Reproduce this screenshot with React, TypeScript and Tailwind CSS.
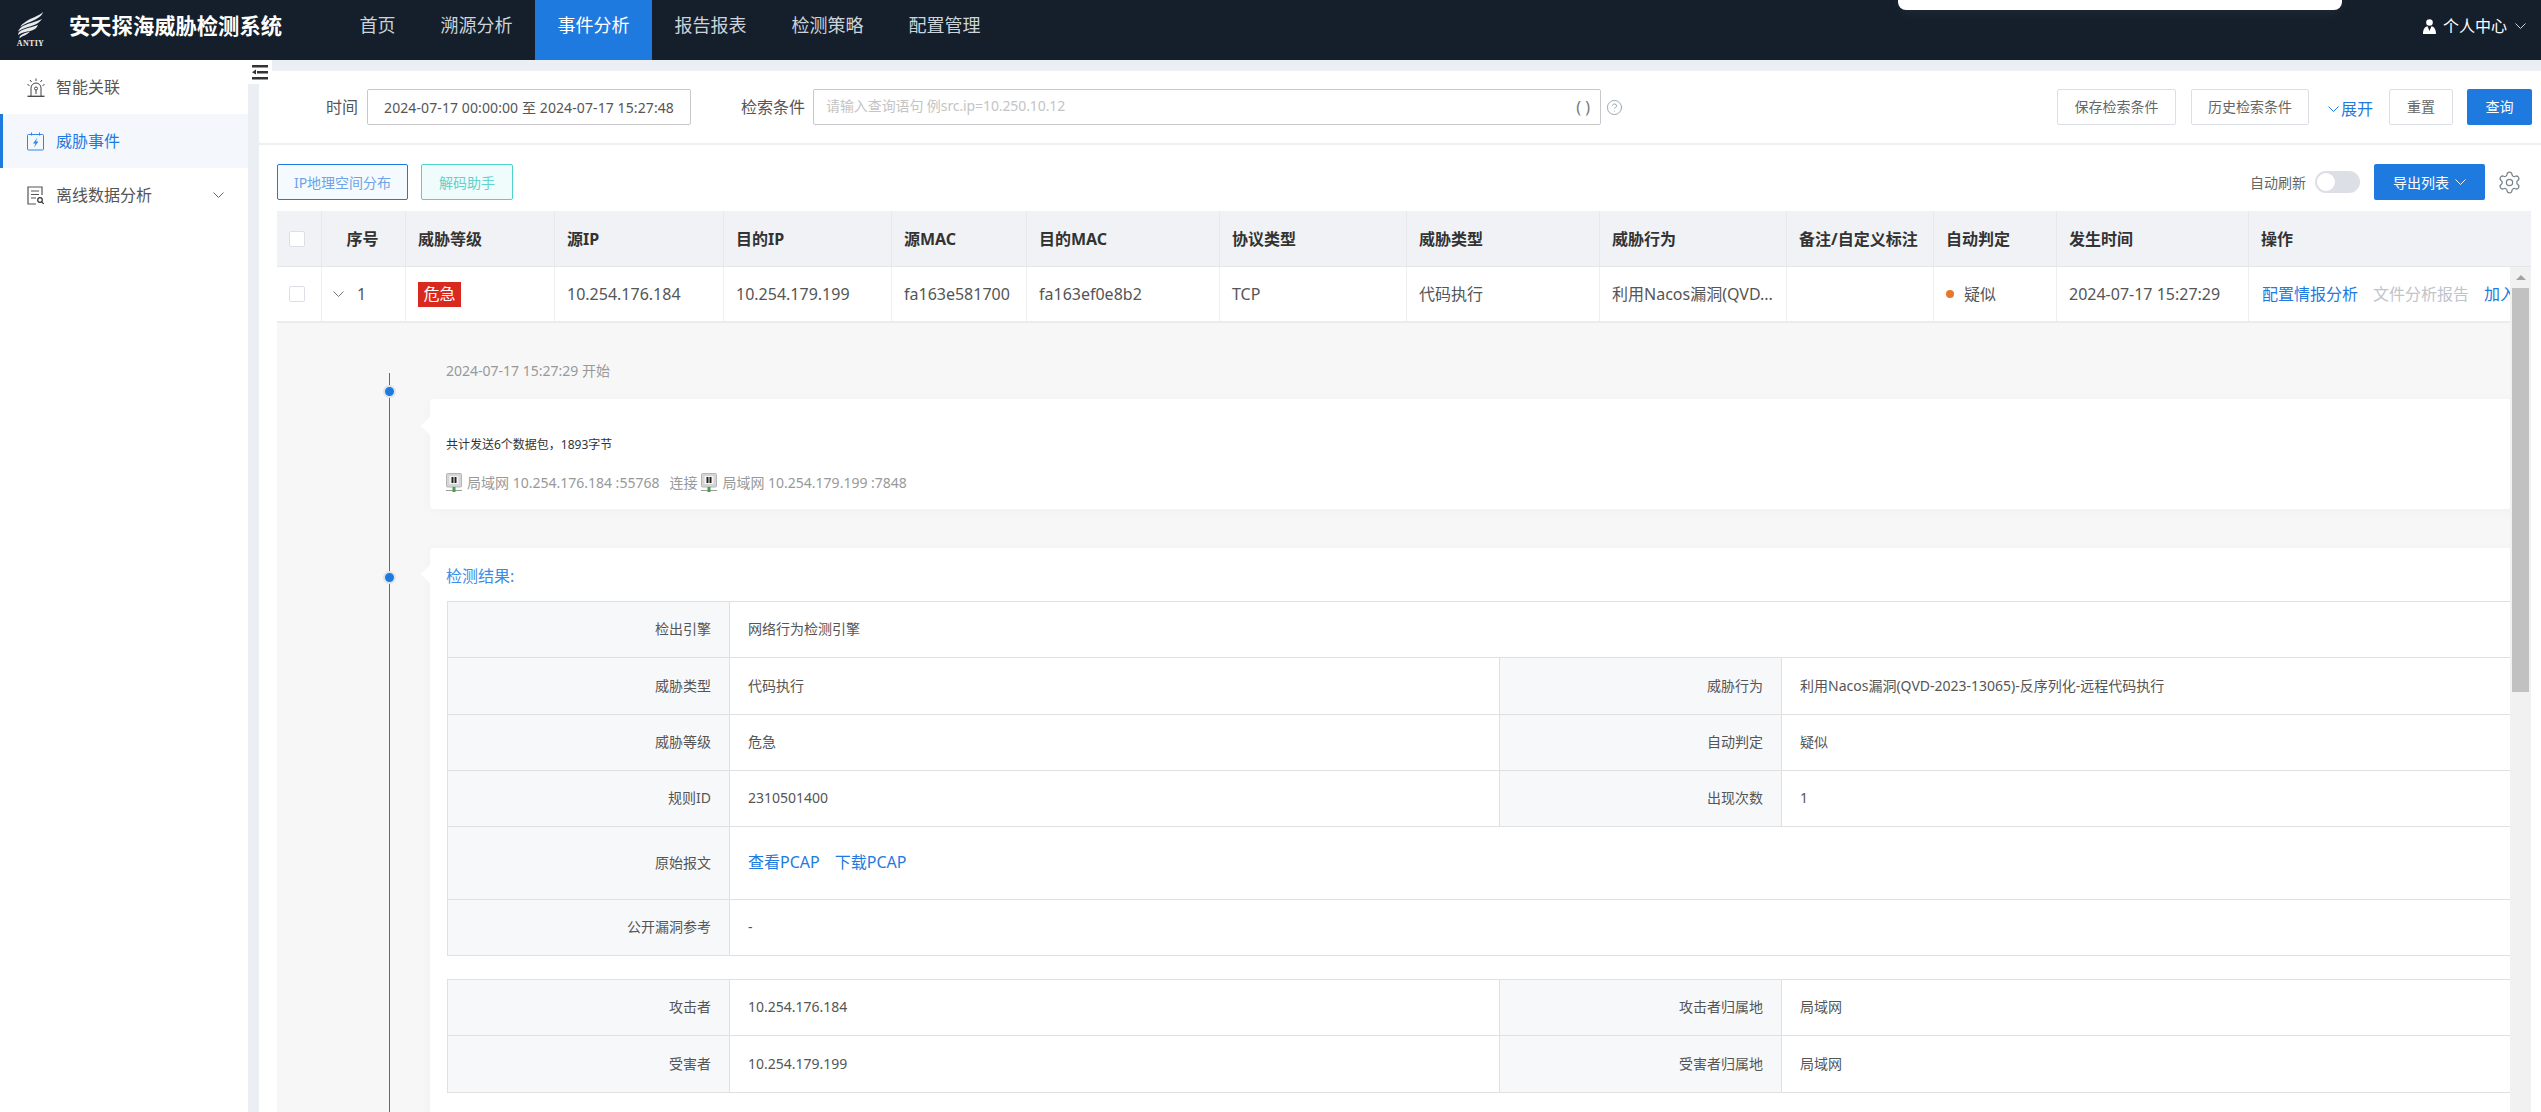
import React from 'react';
import { CircleHelp, Settings } from 'lucide-react';

const navItems = ['首页', '溯源分析', '事件分析', '报告报表', '检测策略', '配置管理'];

const tableCols =
  'grid grid-cols-[45px_84px_149px_169px_168px_135px_193px_187px_193px_187px_147px_123px_192px_282px]';

const headCells = ['威胁等级', '源IP', '目的IP', '源MAC', '目的MAC', '协议类型', '威胁类型', '威胁行为', '备注/自定义标注', '自动判定', '发生时间', '操作'];

// the chevrons in the picture are wide and flat, so drawn by hand
const Chevron = ({ className }: { className?: string }) => (
  <svg width="11" height="6" viewBox="0 0 11 6" fill="none" stroke="currentColor" strokeWidth="1" className={`shrink-0 ${className ?? ''}`}>
    <path d="M0.500 0.500L5.500 5.500L10.500 0.500" />
  </svg>
);

const Logo = () => (
  <div className="ml-[17px] flex w-[27px] shrink-0 flex-col items-center">
    <svg width="27" height="27" viewBox="0 0 27 27" fill="#e8ebee">
      <path d="M26 0C22 4 14 6 9 9.500C6 11.500 4 13 3.500 15C8 11 18 9 23 4.500C24.500 3.300 25.500 1.800 26 0Z" />
      <path d="M25 7C19 10 9 11.500 4 15.500C2.500 16.800 1.500 18 1 19.500C6 15.500 16 14.500 21 11C22.800 9.800 24 8.500 25 7Z" />
      <path d="M21 13C15 15.500 8 16 3.500 19C2 20 1 21.500 1 23C5 19.800 11 20 16 18C18 17.200 20 15.500 21 13Z" />
      <path d="M13 19.500C10 20.500 6 21 3 24C2.500 24.800 2.300 25.600 2.500 26.500C5 23.500 10 23.500 13 19.500Z" />
    </svg>
    <span className="font-['Liberation_Serif',serif] text-[8px] leading-[9px] font-bold tracking-[0.3px] text-[#e8ebee]">ANTIY</span>
  </div>
);

const AlarmIcon = () => (
  <svg width="18" height="19" viewBox="0 0 18 19" fill="none" stroke="#444" strokeWidth="1">
    <path d="M0.500 18.300h17" strokeWidth="1.300" />
    <path d="M4 18V10a5 5 0 0 1 10 0v8" />
    <circle cx="9" cy="10.500" r="1.500" />
    <path d="M9 12v4" />
    <path d="M9 0.500v2.500M3 2l1.500 2M15 2l-1.500 2M0.500 6.500l2 1M17.500 6.500l-2 1" />
  </svg>
);

const BoltIcon = () => (
  <svg width="18" height="19" viewBox="0 0 18 19" fill="none" stroke="#2f86e6" strokeWidth="1">
    <rect x="0.500" y="2.500" width="16" height="15.500" rx="1" />
    <path d="M4.500 0.500v3M12.500 0.500v3" />
    <path d="M10.500 5.500L6 11.500h2.500L7 15.500l4.500-6H9z" fill="#2f86e6" stroke="none" />
  </svg>
);

const ReportIcon = () => (
  <svg width="18" height="19" viewBox="0 0 18 19" fill="none" stroke="#555" strokeWidth="1.200">
    <path d="M15 9V1H1v17h8" />
    <path d="M4 5h8M4 8.500h8M4 12h5" />
    <circle cx="13" cy="14" r="2.300" stroke="#333" />
    <path d="M14.700 15.800l2 2" stroke="#333" />
  </svg>
);

const ServerIcon = () => (
  <svg width="16" height="19" viewBox="0 0 16 19" className="shrink-0">
    <rect x="0.500" y="0.500" width="15" height="13.500" rx="1" fill="#d5d5d5" stroke="#b5b5b5" />
    <rect x="3.500" y="3" width="9" height="8" fill="#f4f4f4" />
    <rect x="5.500" y="4" width="2" height="6" fill="#222" />
    <rect x="8.500" y="4" width="2" height="6" fill="#222" />
    <rect x="0" y="17" width="16" height="1" fill="#999" />
    <rect x="6.500" y="14" width="3" height="5" fill="#3fa34d" />
  </svg>
);

const MenuFold = () => (
  <div className="absolute top-[60px] left-[248px] flex h-[24px] w-[24px] justify-center bg-white pt-[5px]">
    <svg width="16" height="15" viewBox="0 0 16 15" fill="#333">
      <rect x="0" y="0" width="16" height="2.500" />
      <rect x="5" y="6" width="11" height="2.500" />
      <rect x="0" y="12" width="16" height="2.500" />
      <path d="M4 4.500v5L0 7.200z" />
    </svg>
  </div>
);

const Header = () => (
  <header className="relative flex h-[60px] shrink-0 items-center bg-[#151f2b]">
    <Logo />
    <div className="ml-[25px] w-[213px] pb-[8px] text-[21.300px] leading-[28px] font-bold whitespace-nowrap text-white">安天探海威胁检测系统</div>
    <nav className="ml-[55px] flex h-full">
      {navItems.map((item) => (
        <div
          key={item}
          className={`flex h-full items-center px-[22.500px] pb-[10px] text-[18px] whitespace-nowrap ${
            item === '事件分析' ? 'bg-[#1f7ae0] text-white' : 'text-[#ccd3da]'
          }`}
        >
          {item}
        </div>
      ))}
    </nav>
    <div className="absolute top-0 left-[1898px] h-[10px] w-[444px] rounded-b-[8px] bg-white shadow-[0_0_14px_rgba(255,255,255,0.08)]" />
    <div className="ml-auto flex items-center pr-[15px] pb-[8px] text-[16px] text-white">
      <svg width="13" height="15" viewBox="0 0 13 15" fill="#fff" className="mr-[7px]">
        <circle cx="6.500" cy="3.500" r="3.300" />
        <path d="M0 15c0-5 2-7.500 4.500-7.800L6.500 12l2-4.800C11 7.500 13 10 13 15z" />
      </svg>
      个人中心
      <Chevron className="ml-[8px] text-[#ccd3da]" />
    </div>
  </header>
);

const Sidebar = () => (
  <aside className="w-[248px] shrink-0 bg-white text-[16px] text-[#555]">
    <div className="flex h-[54px] items-center pl-[27px]">
      <AlarmIcon />
      <span className="ml-[11px]">智能关联</span>
    </div>
    <div className="flex h-[54px] items-center border-l-[3px] border-[#1f7ae0] bg-[#f4f8fc] pl-[24px] text-[#1f7ae0]">
      <BoltIcon />
      <span className="ml-[11px]">威胁事件</span>
    </div>
    <div className="flex h-[54px] items-center pl-[27px]">
      <ReportIcon />
      <span className="ml-[11px]">离线数据分析</span>
      <Chevron className="ml-auto mr-[24px] text-[#666]" />
    </div>
  </aside>
);

const PlainBtn = ({ children, w }: { children: React.ReactNode; w: string }) => (
  <button className={`flex h-[36px] items-center justify-center rounded-[2px] border border-[#dcdfe6] bg-white pb-[2px] text-[14px] text-[#666] ${w}`}>
    {children}
  </button>
);

const SearchBar = () => (
  <div className="flex h-[74px] shrink-0 items-start rounded-bl-[4px] border-b-2 border-[#f0f0f0] bg-white pt-[18px] pr-[9px] pl-[67px]">
    <div className="flex h-[36px] items-center text-[16px] text-[#555]">时间</div>
    <div className="ml-[9px] flex h-[36px] w-[324px] items-center justify-center rounded-[2px] border border-[#c8c8cc] text-[14px] tracking-[0.1px] whitespace-nowrap text-[#555]">
      2024-07-17 00:00:00 至 2024-07-17 15:27:48
    </div>
    <div className="ml-[50px] flex h-[36px] items-center text-[16px] text-[#555]">检索条件</div>
    <div className="ml-[8px] flex h-[36px] w-[788px] items-center rounded-[2px] border border-[#c8c8cc] pr-[10px] pb-[4px] pl-[12px]">
      <span className="text-[14px] tracking-[-0.1px] text-[#c4c4c4]">请输入查询语句 例src.ip=10.250.10.12</span>
      <span className="ml-auto pt-[4px] text-[16px] text-[#777]">( )</span>
    </div>
    <div className="ml-[5px] flex h-[36px] items-center">
      <CircleHelp size={17} strokeWidth={1.300} className="text-[#8fa3ad]" />
    </div>
    <div className="ml-auto flex items-center">
      <PlainBtn w="w-[119px]">保存检索条件</PlainBtn>
      <PlainBtn w="ml-[15px] w-[118px]">历史检索条件</PlainBtn>
      <div className="ml-[19px] flex h-[36px] items-center pt-[4px] text-[16px] text-[#1f7ae0]">
        <Chevron className="mr-[2px]" />
        展开
      </div>
      <PlainBtn w="ml-[16px] w-[64px]">重置</PlainBtn>
      <button className="ml-[14px] h-[36px] w-[65px] rounded-[2px] bg-[#1f7ae0] pb-[2px] text-[14px] text-white">查询</button>
    </div>
  </div>
);

const Toolbar = () => (
  <div className="flex h-[66px] shrink-0 items-start bg-white pt-[19px] pr-[19px] pl-[18px]">
    <button className="h-[36px] w-[131px] rounded-[2px] border border-[#1f7ae0] bg-[#f5faff] text-[14px] whitespace-nowrap text-[#6fa3e6]">IP地理空间分布</button>
    <button className="ml-[13px] h-[36px] w-[92px] rounded-[2px] border border-[#4fd1cc] bg-[#effcfb] text-[14px] text-[#62d2cd]">解码助手</button>
    <div className="ml-auto flex h-[36px] items-center text-[14px] text-[#666]">
      自动刷新
      <div className="ml-[9px] flex h-[22px] w-[45px] items-center rounded-full bg-[#dcdfe6] pl-[2px]">
        <div className="h-[18px] w-[18px] rounded-full bg-white" />
      </div>
      <button className="ml-[14px] flex h-[36px] w-[111px] items-center rounded-[2px] bg-[#1f7ae0] pl-[19px] text-white">
        导出列表
        <Chevron className="ml-[6px]" />
      </button>
      <Settings size={25} strokeWidth={1.200} className="ml-[12px] text-[#77848c]" />
    </div>
  </div>
);

const Check = () => <div className="h-[16px] w-[16px] rounded-[2px] border border-[#dcdfe6] bg-white" />;

const TableHead = () => (
  <div className={`${tableCols} h-[56px] shrink-0 border-b border-[#e4e6ea] bg-[#f0f2f5] text-[16px] font-bold text-[#333]`}>
    <div className="flex items-center justify-center border-r border-[#e6e8ec] pr-[5px]"><Check /></div>
    <div className="flex items-center justify-center border-r border-[#e6e8ec] pr-[2px]">序号</div>
    {headCells.map((cell, i) => (
      <div key={cell} className={`flex items-center whitespace-nowrap pl-[12px] ${i < headCells.length - 1 ? 'border-r border-[#e6e8ec]' : ''}`}>{cell}</div>
    ))}
  </div>
);

const bodyCell = 'flex items-center overflow-hidden whitespace-nowrap border-r border-[#eceef2] pl-[12px]';

const TableRow = () => (
  <div className={`${tableCols} h-[56px] border-b-2 border-[#ececec] bg-white text-[16px] text-[#555]`}>
    <div className="flex items-center justify-center border-r border-[#eceef2] pr-[5px]"><Check /></div>
    <div className="flex items-center border-r border-[#eceef2] pl-[11px]">
      <Chevron className="text-[#777]" />
      <span className="ml-[13px]">1</span>
    </div>
    <div className={bodyCell}>
      <span className="flex h-[25px] w-[43px] items-center justify-center bg-[#d9281e] text-white">危急</span>
    </div>
    <div className={bodyCell}>10.254.176.184</div>
    <div className={bodyCell}>10.254.179.199</div>
    <div className={bodyCell}>fa163e581700</div>
    <div className={bodyCell}>fa163ef0e8b2</div>
    <div className={bodyCell}>TCP</div>
    <div className={bodyCell}>代码执行</div>
    <div className={bodyCell}>利用Nacos漏洞(QVD...</div>
    <div className={bodyCell}></div>
    <div className={bodyCell}>
      <span className="mr-[10px] h-[8px] w-[8px] rounded-full bg-[#e8772a]" />
      疑似
    </div>
    <div className={bodyCell}>2024-07-17 15:27:29</div>
    <div className="flex items-center whitespace-nowrap pl-[13px]">
      <span className="text-[#1f7ae0]">配置情报分析</span>
      <span className="ml-[15px] text-[#c0c4cc]">文件分析报告</span>
      <span className="ml-[15px] text-[#1f7ae0]">加入</span>
    </div>
  </div>
);

const Arrow = ({ top }: { top: string }) => (
  <div className={`absolute -left-[9px] h-0 w-0 border-y-[9px] border-r-[9px] border-y-transparent border-r-white ${top}`} />
);

const Dot = ({ top }: { top: string }) => (
  <div className={`absolute left-[106px] h-[13px] w-[13px] rounded-full border-[2px] border-[#dfe3e8] bg-[#1f7ae0] ${top}`} />
);

const labelTd = 'border border-[#e0e0e0] bg-[#f7f8fa] pr-[18px] pb-[2px] text-right text-[#555]';
const valueTd = 'border border-[#e0e0e0] pb-[2px] pl-[18px] text-[#555]';

type DetailCell = { label: string; value: React.ReactNode };

const DetailRow = ({ cells, h }: { cells: DetailCell[]; h: string }) => (
  <tr className={h}>
    {cells.map((cell) => (
      <React.Fragment key={cell.label}>
        <td className={labelTd}>{cell.label}</td>
        <td className={valueTd} colSpan={cells.length === 1 ? 3 : 1}>{cell.value}</td>
      </React.Fragment>
    ))}
  </tr>
);

const DetailTable = ({ children }: { children: React.ReactNode }) => (
  <table className="w-[2104px] table-fixed border-collapse text-[14px]">
    <colgroup>
      <col className="w-[282px]" />
      <col className="w-[770px]" />
      <col className="w-[282px]" />
      <col className="w-[770px]" />
    </colgroup>
    <tbody>{children}</tbody>
  </table>
);

const Detail = () => (
  <div className="relative h-[790px] bg-[#f7f7f7] pt-[38px]">
    <div className="absolute top-[50px] bottom-0 left-[112px] w-px bg-[#1f7ae0]" />
    <Dot top="top-[62px]" />
    <Dot top="top-[248px]" />
    <div className="ml-[169px] h-[20px] text-[14px] leading-[20px] whitespace-nowrap text-[#999]">2024-07-17 15:27:29 开始</div>

    <div className="relative mt-[18px] ml-[153px] h-[110px] w-[2140px] rounded-[4px] bg-white pt-[38px] pl-[16px] shadow-[0_2px_12px_rgba(0,0,0,0.03)]">
      <Arrow top="top-[18px]" />
      <div className="h-[16px] text-[12px] leading-[16px] text-[#333]">共计发送6个数据包，1893字节</div>
      <div className="mt-[19px] flex h-[20px] items-center text-[14px] whitespace-nowrap text-[#999]">
        <ServerIcon />
        <span className="ml-[5px]">局域网 10.254.176.184 :55768</span>
        <span className="ml-[10px]">连接</span>
        <span className="ml-[4px]"><ServerIcon /></span>
        <span className="ml-[5px]">局域网 10.254.179.199 :7848</span>
      </div>
    </div>

    <div className="relative mt-[39px] ml-[153px] w-[2140px] rounded-[4px] bg-white pt-[16px] pb-[40px] pl-[17px] shadow-[0_2px_12px_rgba(0,0,0,0.03)]">
      <Arrow top="top-[17px]" />
      <div className="-ml-[1px] h-[24px] text-[16px] leading-[24px] text-[#3d8be6]">检测结果:</div>
      <div className="mt-[13px]">
        <DetailTable>
          <DetailRow h="h-[56px]" cells={[{ label: '检出引擎', value: '网络行为检测引擎' }]} />
          <DetailRow
            h="h-[57px]"
            cells={[
              { label: '威胁类型', value: '代码执行' },
              { label: '威胁行为', value: '利用Nacos漏洞(QVD-2023-13065)-反序列化-远程代码执行' },
            ]}
          />
          <DetailRow
            h="h-[56px]"
            cells={[
              { label: '威胁等级', value: '危急' },
              { label: '自动判定', value: '疑似' },
            ]}
          />
          <DetailRow
            h="h-[56px]"
            cells={[
              { label: '规则ID', value: '2310501400' },
              { label: '出现次数', value: '1' },
            ]}
          />
          <DetailRow
            h="h-[73px]"
            cells={[
              {
                label: '原始报文',
                value: (
                  <span className="text-[16px] text-[#1f7ae0]">
                    查看PCAP<span className="ml-[15px]">下载PCAP</span>
                  </span>
                ),
              },
            ]}
          />
          <DetailRow h="h-[56px]" cells={[{ label: '公开漏洞参考', value: '-' }]} />
        </DetailTable>
      </div>
      <div className="mt-[23px]">
        <DetailTable>
          <DetailRow
            h="h-[56px]"
            cells={[
              { label: '攻击者', value: '10.254.176.184' },
              { label: '攻击者归属地', value: '局域网' },
            ]}
          />
          <DetailRow
            h="h-[57px]"
            cells={[
              { label: '受害者', value: '10.254.179.199' },
              { label: '受害者归属地', value: '局域网' },
            ]}
          />
        </DetailTable>
      </div>
    </div>
  </div>
);

const Scrollbar = () => (
  <div className="w-[21px] shrink-0 bg-[#f1f1f1]">
    <div className="flex h-[21px] items-center justify-center">
      <div className="h-0 w-0 border-x-[5px] border-b-[5px] border-x-transparent border-b-[#a3a3a3]" />
    </div>
    <div className="mx-auto h-[404px] w-[17px] bg-[#c1c1c1]" />
  </div>
);

const App = () => {
  return (
    <div className="relative flex h-screen w-full flex-col overflow-hidden bg-[#ebeef3] font-['Noto_Sans','Noto_Sans_CJK_SC',sans-serif]">
      <Header />
      <MenuFold />
      <div className="flex min-h-0 flex-1">
        <Sidebar />
        <div className="ml-[11px] flex min-w-0 flex-1 flex-col pt-[11px]">
          <SearchBar />
          <Toolbar />
          <div className="flex min-h-0 flex-1 flex-col bg-white pr-[10px] pl-[18px]">
            <TableHead />
            <div className="flex min-h-0 flex-1">
              <div className="min-w-0 flex-1 overflow-hidden">
                <TableRow />
                <Detail />
              </div>
              <Scrollbar />
            </div>
          </div>
        </div>
      </div>
    </div>
  );
};

export default App;
